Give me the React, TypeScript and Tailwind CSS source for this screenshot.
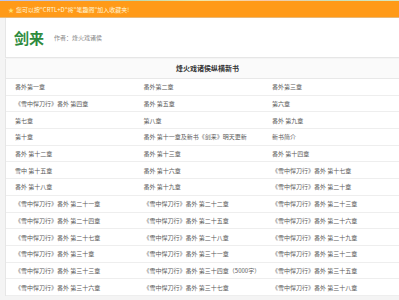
import { FC } from "react";

const rows: string[][] = [
  ["番外第一章", "番外第二章", "番外第三章"],
  ["《雪中悍刀行》番外 第四章", "番外 第五章", "第六章"],
  ["第七章", "第八章", "番外 第九章"],
  ["第十章", "番外 第十一章及新书《剑来》明天更新", "新书简介"],
  ["番外 第十二章", "番外 第十三章", "番外 第十四章"],
  ["雪中 第十五章", "番外 第十六章", "《雪中悍刀行》番外 第十七章"],
  ["番外 第十八章", "番外 第十九章", "《雪中悍刀行》番外 第二十章"],
  ["《雪中悍刀行》番外 第二十一章", "《雪中悍刀行》番外 第二十二章", "《雪中悍刀行》番外 第二十三章"],
  ["《雪中悍刀行》番外 第二十四章", "《雪中悍刀行》番外 第二十五章", "《雪中悍刀行》番外 第二十六章"],
  ["《雪中悍刀行》番外 第二十七章", "《雪中悍刀行》番外 第二十八章", "《雪中悍刀行》番外 第二十九章"],
  ["《雪中悍刀行》番外 第三十章", "《雪中悍刀行》番外 第三十一章", "《雪中悍刀行》番外 第三十二章"],
  ["《雪中悍刀行》番外 第三十三章", "《雪中悍刀行》番外 第三十四章（5000字）", "《雪中悍刀行》番外 第三十五章"],
  ["《雪中悍刀行》番外 第三十六章", "《雪中悍刀行》番外 第三十七章", "《雪中悍刀行》番外 第三十八章"],
];

const App: FC = () => {
  return (
    <div className="w-[399px] h-[300px] overflow-hidden bg-[#f4f4f4] font-['Noto_Sans_CJK_SC',sans-serif]">
      {/* top strip */}
      <div className="h-[1px] w-full bg-[linear-gradient(90deg,#b8c4f0,#c8c8d8,#b8d8b0,#f0e8a8,#f8c8a8,#c8e0b8,#d8e8c0)]" />

      <div className="h-[17px] bg-[#ff9a18] border-b border-[#e8b878] flex items-center pl-[8px] gap-[2px] text-[6px] text-[#fff6d8]">
        <span className="text-[#ffe070] text-[6px]">★</span>
        <span>您可以按"CRTL+D"将"笔趣阁"加入收藏夹!</span>
      </div>

      <div className="ml-[5px] w-[420px]">
        <div className="h-[40px] bg-white border-l border-b border-[#e6e6e6] flex items-center pl-[8px]">
          <span className="text-[15px] font-bold text-[#2e8b3e] leading-none">剑来</span>
          <span className="ml-[10px] text-[6px] text-[#888]">作者：烽火戏诸侯</span>
        </div>

        <div className="mt-[1px] bg-white border-l border-[#e6e6e6]">
          <div className="h-[20px] bg-[#fafafa] border-b border-[#e8e8e8] flex items-center justify-center pr-[16px] text-[7px] font-bold text-[#333]">
            烽火戏诸侯纵横新书
          </div>
          {rows.map((r, i) => (
            <div
              key={i}
              className="h-[16.7px] border-b border-[#eeeeee] grid grid-cols-[128.5px_128.5px_128.5px] pl-[9px] items-center text-[6px] text-[#5a5a5a] whitespace-nowrap"
            >
              {r.map((t, j) => (
                <span key={j}>{t}</span>
              ))}
            </div>
          ))}
        </div>
      </div>
    </div>
  );
};

export default App;
